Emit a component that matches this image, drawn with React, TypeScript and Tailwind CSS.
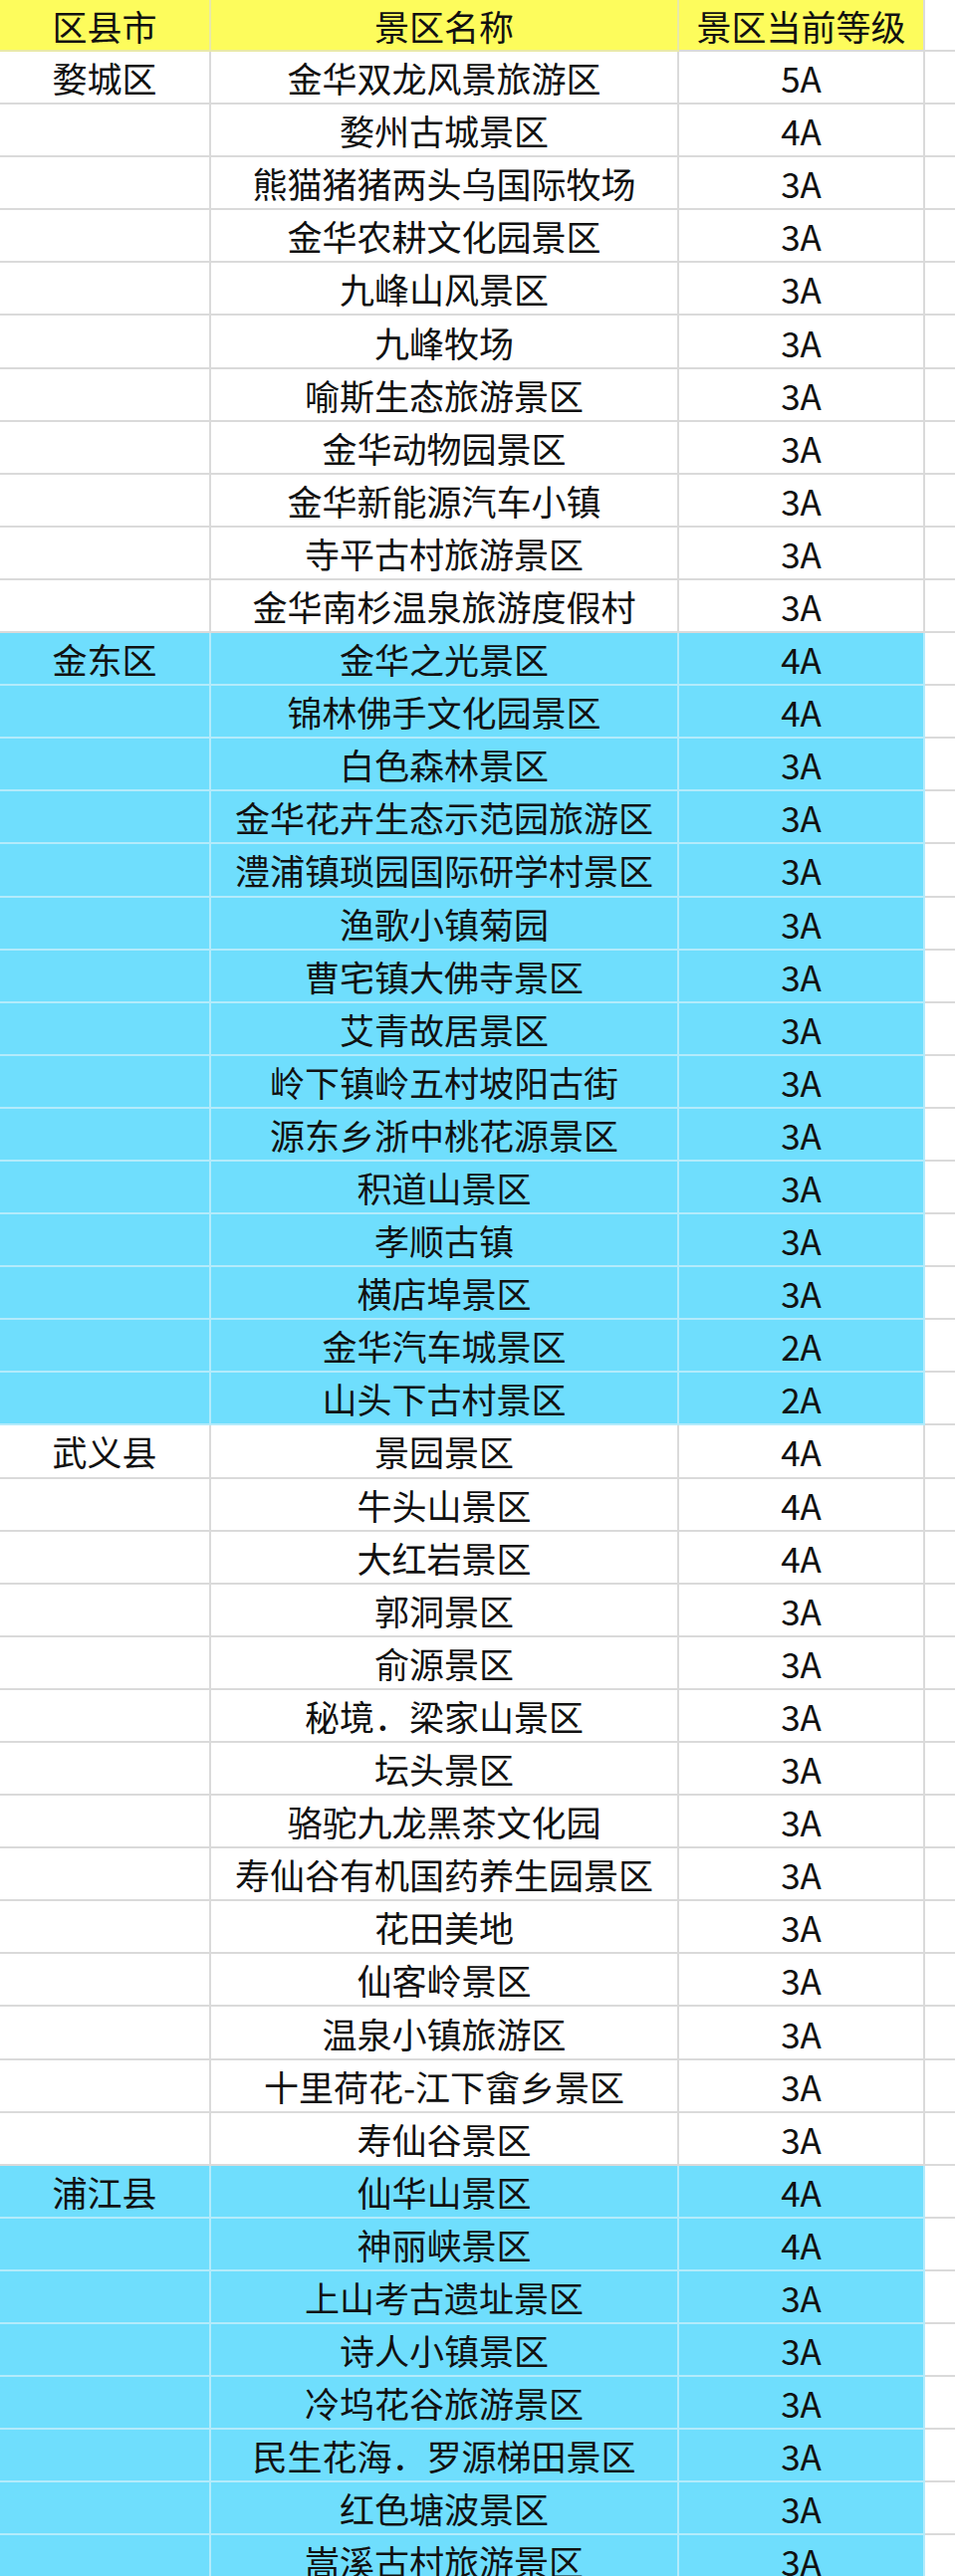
import React from "react";

type Row = { district: string; name: string; level: string };

const groups: { district: string; highlight: boolean; items: [string, string][] }[] = [
  {
    district: "婺城区",
    highlight: false,
    items: [
      ["金华双龙风景旅游区", "5A"],
      ["婺州古城景区", "4A"],
      ["熊猫猪猪两头乌国际牧场", "3A"],
      ["金华农耕文化园景区", "3A"],
      ["九峰山风景区", "3A"],
      ["九峰牧场", "3A"],
      ["喻斯生态旅游景区", "3A"],
      ["金华动物园景区", "3A"],
      ["金华新能源汽车小镇", "3A"],
      ["寺平古村旅游景区", "3A"],
      ["金华南杉温泉旅游度假村", "3A"],
    ],
  },
  {
    district: "金东区",
    highlight: true,
    items: [
      ["金华之光景区", "4A"],
      ["锦林佛手文化园景区", "4A"],
      ["白色森林景区", "3A"],
      ["金华花卉生态示范园旅游区", "3A"],
      ["澧浦镇琐园国际研学村景区", "3A"],
      ["渔歌小镇菊园", "3A"],
      ["曹宅镇大佛寺景区", "3A"],
      ["艾青故居景区", "3A"],
      ["岭下镇岭五村坡阳古街", "3A"],
      ["源东乡浙中桃花源景区", "3A"],
      ["积道山景区", "3A"],
      ["孝顺古镇", "3A"],
      ["横店埠景区", "3A"],
      ["金华汽车城景区", "2A"],
      ["山头下古村景区", "2A"],
    ],
  },
  {
    district: "武义县",
    highlight: false,
    items: [
      ["景园景区", "4A"],
      ["牛头山景区", "4A"],
      ["大红岩景区", "4A"],
      ["郭洞景区", "3A"],
      ["俞源景区", "3A"],
      ["秘境．梁家山景区", "3A"],
      ["坛头景区", "3A"],
      ["骆驼九龙黑茶文化园", "3A"],
      ["寿仙谷有机国药养生园景区", "3A"],
      ["花田美地", "3A"],
      ["仙客岭景区", "3A"],
      ["温泉小镇旅游区", "3A"],
      ["十里荷花-江下畲乡景区", "3A"],
      ["寿仙谷景区", "3A"],
    ],
  },
  {
    district: "浦江县",
    highlight: true,
    items: [
      ["仙华山景区", "4A"],
      ["神丽峡景区", "4A"],
      ["上山考古遗址景区", "3A"],
      ["诗人小镇景区", "3A"],
      ["冷坞花谷旅游景区", "3A"],
      ["民生花海．罗源梯田景区", "3A"],
      ["红色塘波景区", "3A"],
      ["嵩溪古村旅游景区", "3A"],
    ],
  },
];

function TableRow({ row, highlight }: { row: Row; highlight: boolean }) {
  const cell = highlight
    ? "bg-[#6fdefd] border-[#b3ebfb]"
    : "bg-white border-[#dadada]";
  return (
    <div className="flex h-[53.1px]">
      <div className={`w-[212px] shrink-0 flex items-center justify-center border-b-2 border-r-2 ${cell}`}>
        {row.district}
      </div>
      <div className={`w-[470px] shrink-0 flex items-center justify-center border-b-2 border-r-2 ${cell}`}>
        {row.name}
      </div>
      <div className={`w-[247px] shrink-0 flex items-center justify-center border-b-2 border-r-2 ${cell}`}>
        {row.level}
      </div>
      <div className="flex-1 bg-white border-b-2 border-[#dadada]" />
    </div>
  );
}

export default function App() {
  return (
    <div
      className="w-[959px] h-[2588px] overflow-hidden bg-white text-[35px] leading-none text-[#111]"
      style={{ fontFamily: '"Noto Sans CJK SC", "Noto Sans", sans-serif' }}
    >
      <div className="flex h-[52px]">
        <div className="w-[212px] shrink-0 flex items-center justify-center bg-[#fdfc5c] border-b-2 border-r-2 border-[#e9e9a8]">
          区县市
        </div>
        <div className="w-[470px] shrink-0 flex items-center justify-center bg-[#fdfc5c] border-b-2 border-r-2 border-[#e9e9a8]">
          景区名称
        </div>
        <div className="w-[247px] shrink-0 flex items-center justify-center bg-[#fdfc5c] border-b-2 border-r-2 border-[#dadada]">
          景区当前等级
        </div>
        <div className="flex-1 bg-white border-b-2 border-[#dadada]" />
      </div>
      {groups.map((g) =>
        g.items.map(([name, level], i) => (
          <TableRow
            key={g.district + name}
            highlight={g.highlight}
            row={{ district: i === 0 ? g.district : "", name, level }}
          />
        ))
      )}
    </div>
  );
}
